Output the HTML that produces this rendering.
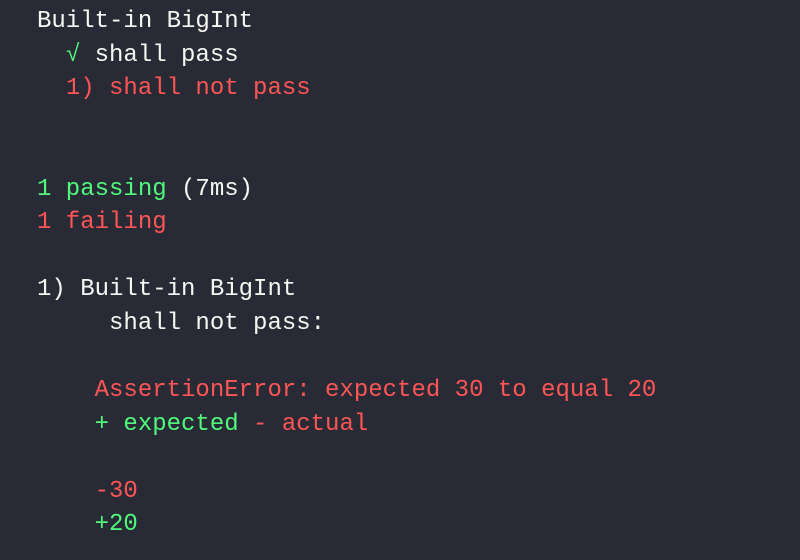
<!DOCTYPE html>
<html><head><style>
html,body{margin:0;padding:0;background:#282a36;width:800px;height:560px;overflow:hidden}
pre{margin:0;position:absolute;left:37px;top:5px;font-family:"Liberation Mono","DejaVu Sans Mono",monospace;font-size:24px;line-height:33.55px;color:#f8f8f2}
.g{color:#50fa7b}.r{color:#ff5555}
</style></head><body>
<pre>Built-in BigInt
  <span class="g">√</span> shall pass
  <span class="r">1) shall not pass</span>


<span class="g">1 passing</span> (7ms)
<span class="r">1 failing</span>

1) Built-in BigInt
     shall not pass:

    <span class="r">AssertionError: expected 30 to equal 20</span>
    <span class="g">+ expected</span> <span class="r">- actual</span>

    <span class="r">-30</span>
    <span class="g">+20</span>
</pre>
</body></html>
